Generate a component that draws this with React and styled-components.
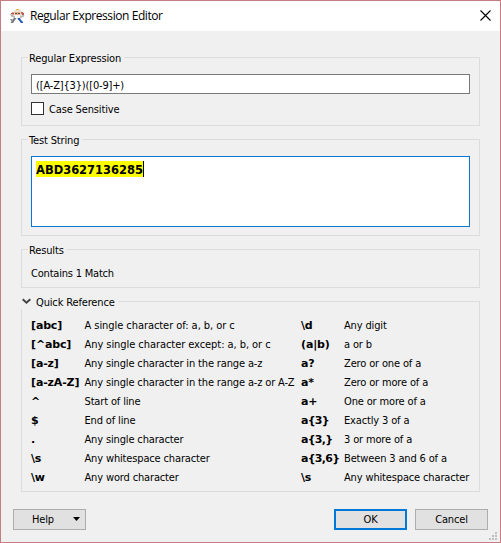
import React from 'react';
import styled, { createGlobalStyle } from 'styled-components';

const Global = createGlobalStyle`
  *, *::before, *::after { box-sizing: border-box; }
  body { margin: 0; }
`;

const Dialog = styled.div`
  width: 501px;
  height: 543px;
  display: flex;
  flex-direction: column;
  position: relative;
  border: 1px solid #c67c80;
  background: #f0f0f0;
  color: #000;
  font: 11px/14px 'DejaVu Sans Condensed', 'DejaVu Sans', sans-serif;
  font-stretch: condensed;
  letter-spacing: -0.15px;
  white-space: nowrap;
  overflow: hidden;
`;

const TitleBar = styled.header`
  flex: none;
  height: 30px;
  display: flex;
  align-items: center;
  padding: 0 9px 0 8px;
  background: #fff;
`;

const Title = styled.h1`
  flex: 1;
  margin: 0 0 0 4px;
  font: 400 12px/16px 'Open Sans', 'Noto Sans', sans-serif;
  letter-spacing: -0.43px;
`;

const CloseButton = styled.button`
  width: 11px;
  height: 11px;
  margin-bottom: 2px;
  padding: 0;
  border: 0;
  background: none;
  display: flex;
`;

const Content = styled.main`
  flex: none;
  display: flex;
  flex-direction: column;
  gap: 13px;
  padding: 26px 20px 0 20px;
`;

const Group = styled.section`
  height: ${(p) => p.$height}px;
  border: 1px solid #dcdcdc;
  padding: 0 9px;
`;

const Legend = styled.h2`
  width: fit-content;
  height: 14px;
  margin: -7px 0 0 ${(p) => (p.$icon ? -10 : -3)}px;
  padding: 2px 3px 0 1px;
  display: flex;
  align-items: center;
  gap: 5px;
  background: #f0f0f0;
  font: inherit;
  letter-spacing: -0.15px;

  svg { margin-bottom: 3px; }
`;

const ExpressionInput = styled.div`
  height: 20px;
  margin-top: 9px;
  padding: 4px 0 0 4px;
  border: 1px solid #7a7a7a;
  background: #fff;
  letter-spacing: -0.17px;
`;

const CheckRow = styled.div`
  height: 13px;
  margin-top: 8px;
  display: flex;
  gap: 5px;
  line-height: 15px;
`;

const CheckBox = styled.span`
  width: 13px;
  height: 13px;
  border: 1px solid #333;
  background: #fff;
`;

const TestArea = styled.div`
  height: 71px;
  margin-top: 9px;
  padding: 4px;
  border: 1px solid #0a78d2;
  background: #fff;
`;

const Match = styled.mark`
  display: block;
  width: 108px;
  height: 16px;
  border-right: 1px solid #000;
  background: #ff0;
  color: #000;
  font: bold 11.5px/18px 'DejaVu Sans', sans-serif;
  letter-spacing: -0.02px;
`;

const ResultText = styled.p`
  margin: 10px 0 0;
  letter-spacing: -0.2px;
`;

const Reference = styled.div`
  display: grid;
  grid-template-columns: 53.5px 216.5px 43px 1fr;
  grid-auto-rows: 19px;
  align-items: center;
  margin-top: 7px;
`;

const Pattern = styled.span`
  font: bold 11px/14px 'DejaVu Sans', sans-serif;
  letter-spacing: ${(p) => (p.$tight ? '-0.7px' : '-0.15px')};
`;

const Meaning = styled.span`
  letter-spacing: ${(p) => p.$spacing || '-0.15px'};
`;

const Footer = styled.footer`
  display: flex;
  margin-top: 17px;
  padding: 0 12px;
  gap: 8px;
`;

const Button = styled.button`
  width: 73px;
  height: 21px;
  padding: 1px 0 0;
  display: flex;
  align-items: center;
  justify-content: center;
  gap: 19px;
  border: ${(p) => (p.$primary ? '2px solid #0078d7' : '1px solid #adadad')};
  background: #e1e1e1;
  color: #000;
  font: inherit;
  letter-spacing: -0.15px;
`;

const HelpButton = styled(Button)`
  justify-content: flex-start;
  padding-left: 18px;
  margin-right: auto;

  svg { margin-bottom: 2px; }
`;

const Grip = styled.svg`
  position: absolute;
  right: 3px;
  bottom: 2px;
`;

const AppIcon = () => (
  <svg width="17" height="17" viewBox="0 0 17 17">
    <path d="M5 2.5 7 1h3.5l2 1.5v2h-8z" fill="#eadfca" />
    <path d="M7 1h3v1H7z" fill="#e6b84c" />
    <path d="M3 4.5h2v2H2v-1zM12 4h1.5L15 5.5v2h-2z" fill="#b94b3b" />
    <path d="M5.5 4h6v4h-6z" fill="#e5b18c" />
    <path d="M6 5h2v1H6zM9 5h2v1H9z" fill="#555" />
    <path d="M1 6h2.5L5 8h7l2-1.5 1.5 1-1 1.5-2.5 1H5L2 8.5z" fill="#b8b8b8" />
    <path d="M6 7h5v3H6z" fill="#f5f5f5" />
    <path d="M5 10h2.5L4 15H1.5l1.5-2.5z" fill="#737780" />
    <path d="M1 11h2l1 1v1H2z" fill="#929292" />
    <path d="M8.5 10H11l1 2 2 2v1h-2l-2-2.5-1-1z" fill="#2357b8" />
  </svg>
);

const CloseIcon = () => (
  <svg width="11" height="11" viewBox="0 0 11 11">
    <path d="m.5.5 10 10M10.5.5l-10 10" fill="none" stroke="#000" strokeWidth="1.1" />
  </svg>
);

const Chevron = () => (
  <svg width="9" height="7" viewBox="0 0 9 7">
    <path d="m.7 1.2 3.8 3.5 3.8-3.5" fill="none" stroke="#444" strokeWidth="2" />
  </svg>
);

const entries = [
  ['[abc]', 'A single character of: a, b, or c', '\\d', 'Any digit', '-0.06px'],
  ['[^abc]', 'Any single character except: a, b, or c', '(a|b)', 'a or b', '-0.06px'],
  ['[a-z]', 'Any single character in the range a-z', 'a?', 'Zero or one of a'],
  ['[a-zA-Z]', 'Any single character in the range a-z or A-Z', 'a*', 'Zero or more of a'],
  ['^', 'Start of line', 'a+', 'One or more of a'],
  ['$', 'End of line', 'a{3}', 'Exactly 3 of a'],
  ['.', 'Any single character', 'a{3,}', '3 or more of a'],
  ['\\s', 'Any whitespace character', 'a{3,6}', 'Between 3 and 6 of a'],
  ['\\w', 'Any word character', '\\s', 'Any whitespace character'],
];

const gripDots = [[6, 0], [3, 3], [6, 3], [0, 6], [3, 6], [6, 6]];

export default function App() {
  return (
    <>
      <Global />
      <Dialog>
        <TitleBar>
          <AppIcon />
          <Title>Regular Expression Editor</Title>
          <CloseButton aria-label="Close"><CloseIcon /></CloseButton>
        </TitleBar>
        <Content>
          <Group $height={69}>
            <Legend>Regular Expression</Legend>
            <ExpressionInput>{'([A-Z]{3})([0-9]+)'}</ExpressionInput>
            <CheckRow><CheckBox />Case Sensitive</CheckRow>
          </Group>
          <Group $height={97}>
            <Legend>Test String</Legend>
            <TestArea><Match>ABD3627136285</Match></TestArea>
          </Group>
          <Group $height={39}>
            <Legend>Results</Legend>
            <ResultText>Contains 1 Match</ResultText>
          </Group>
          <Group $height={191}>
            <Legend $icon><Chevron />Quick Reference</Legend>
            <Reference>
              {entries.map(([p1, m1, p2, m2, spacing]) => (
                <React.Fragment key={p1}>
                  <Pattern>{p1}</Pattern>
                  <Meaning $spacing={spacing}>{m1}</Meaning>
                  <Pattern $tight={p2.includes('{')}>{p2}</Pattern>
                  <Meaning>{m2}</Meaning>
                </React.Fragment>
              ))}
            </Reference>
          </Group>
        </Content>
        <Footer>
          <HelpButton>
            Help
            <svg width="7" height="4" viewBox="0 0 7 4"><path d="M0 0h7L3.5 4z" /></svg>
          </HelpButton>
          <Button $primary>OK</Button>
          <Button>Cancel</Button>
        </Footer>
        <Grip width="8" height="8" viewBox="0 0 8 8">
          {gripDots.map(([x, y]) => (
            <rect key={`${x}-${y}`} x={x} y={y} width="2" height="2" fill="#bfbfbf" />
          ))}
        </Grip>
      </Dialog>
    </>
  );
}
